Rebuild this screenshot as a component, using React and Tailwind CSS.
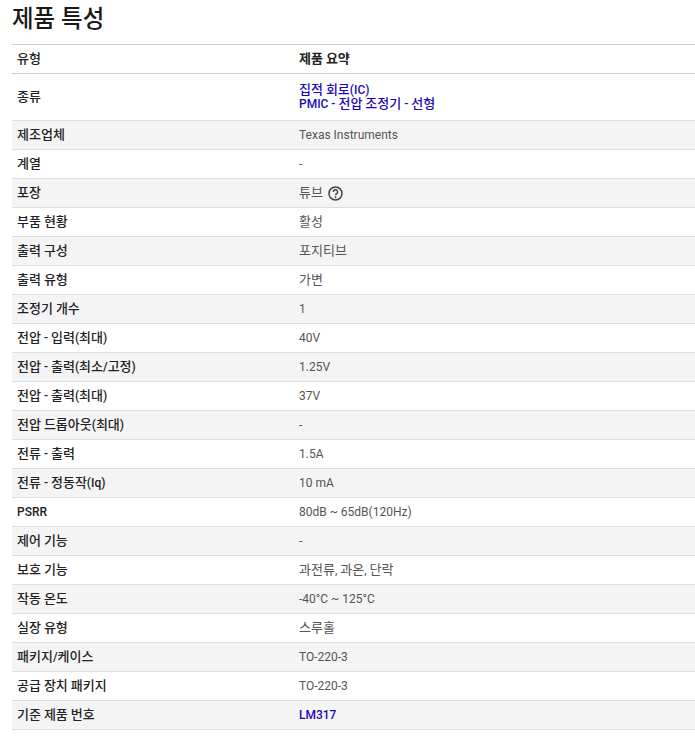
const rows = [
  { label: "제조업체", value: "Texas Instruments" },
  { label: "계열", value: "-" },
  { label: "포장", value: "튜브", help: true },
  { label: "부품 현황", value: "활성" },
  { label: "출력 구성", value: "포지티브" },
  { label: "출력 유형", value: "가변" },
  { label: "조정기 개수", value: "1" },
  { label: "전압 - 입력(최대)", value: "40V" },
  { label: "전압 - 출력(최소/고정)", value: "1.25V" },
  { label: "전압 - 출력(최대)", value: "37V" },
  { label: "전압 드롭아웃(최대)", value: "-" },
  { label: "전류 - 출력", value: "1.5A" },
  { label: "전류 - 정동작(Iq)", value: "10 mA" },
  { label: "PSRR", value: "80dB ~ 65dB(120Hz)" },
  { label: "제어 기능", value: "-" },
  { label: "보호 기능", value: "과전류, 과온, 단락" },
  { label: "작동 온도", value: "-40°C ~ 125°C" },
  { label: "실장 유형", value: "스루홀" },
  { label: "패키지/케이스", value: "TO-220-3" },
  { label: "공급 장치 패키지", value: "TO-220-3" },
  { label: "기준 제품 번호", value: "LM317", link: true },
]

// hangul in the screenshot comes from a wider fallback font than the latin text
function Ko({ children }) {
  return children.split(/([\uAC00-\uD7A3]+)/).map((part, i) =>
    i % 2 === 1 ? (
      <span key={i} className="text-[13px]">{part}</span>
    ) : (
      part
    ),
  )
}

function HelpIcon() {
  return (
    <svg width="15" height="15" viewBox="0 0 24 24" className="ml-[5px] shrink-0 text-[#444]" fill="none" stroke="currentColor">
      <circle cx="12" cy="12" r="10.4" strokeWidth="2.4" />
      <path d="M8.6 9.4a3.4 3.4 0 1 1 5.2 2.8c-1.2.7-1.8 1.3-1.8 2.7" strokeWidth="2.4" />
      <circle cx="12" cy="18" r="1.5" fill="currentColor" stroke="none" />
    </svg>
  )
}

function Row({ label, children, shaded }) {
  return (
    <div className={`flex min-h-[29px] items-center border-b border-[#dedede] ${shaded ? "bg-[#f4f4f4]" : "bg-white"}`}>
      <div className="w-[282px] shrink-0 pl-[5px] font-medium text-[#222]"><Ko>{label}</Ko></div>
      <div className="flex flex-1 items-center pl-[5px] text-[#555]">{children}</div>
    </div>
  )
}

export default function App() {
  return (
    <div className="min-h-[742px] bg-white pl-3 text-[12px] leading-[14px] font-['Roboto','Noto_Sans_CJK_KR',sans-serif]">
      <h2 className="h-11 pt-[4px] text-[23.5px] leading-[30px] font-medium text-[#1a1a1a]">제품 특성</h2>
      <div className="border-t border-[#cfcfcf]">
        <div className="flex h-[29px] items-center border-b border-[#cfcfcf]">
          <div className="w-[282px] shrink-0 pl-[5px] font-medium text-[#222]"><Ko>유형</Ko></div>
          <div className="pl-[5px] font-bold text-[#222]"><Ko>제품 요약</Ko></div>
        </div>
        <div className="flex h-[47px] items-center border-b border-[#dedede]">
          <div className="w-[282px] shrink-0 pl-[5px] font-medium text-[#222]"><Ko>종류</Ko></div>
          <div className="pl-[5px] font-medium text-[#2008b8]">
            <div><Ko>집적 회로(IC)</Ko></div>
            <div><Ko>PMIC - 전압 조정기 - 선형</Ko></div>
          </div>
        </div>
        {rows.map((row, i) => (
          <Row key={row.label} label={row.label} shaded={i % 2 === 0}>
            {row.link ? (
              <span className="font-medium text-[#2008b8]">{row.value}</span>
            ) : (
              <span><Ko>{row.value}</Ko></span>
            )}
            {row.help ? <HelpIcon /> : null}
          </Row>
        ))}
      </div>
    </div>
  )
}
